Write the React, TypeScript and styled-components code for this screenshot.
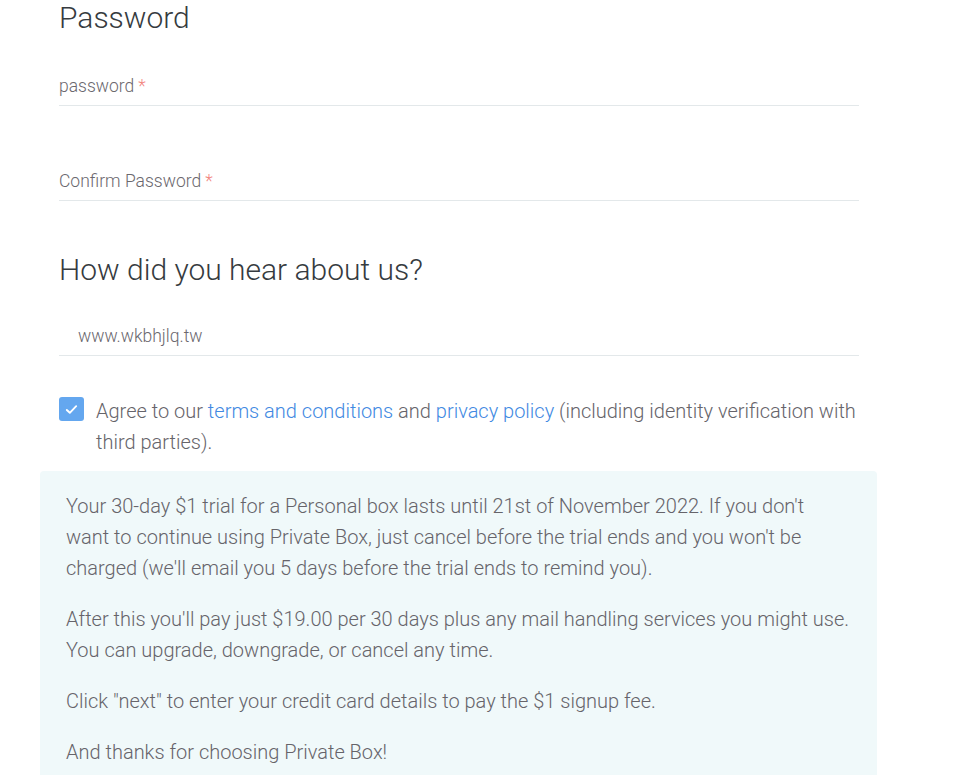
import React from "react";
import styled, { createGlobalStyle } from "styled-components";

const Global = createGlobalStyle`
  html, body { margin: 0; padding: 0; background: #ffffff; }
  body { font-family: Roboto, "Noto Sans", Arial, sans-serif; font-weight: 300; color: #5f6368; }
`;

const Page = styled.div`
  width: 837px;
  margin-left: 40px;
`;

const FormArea = styled.div`
  padding: 0 18px 0 19px;
`;

const Heading = styled.h2<{ $top: number }>`
  margin: ${(p) => p.$top}px 0 0;
  font-size: 30px;
  line-height: 36px;
  font-weight: 300;
  color: #363b40;
`;

const Field = styled.div<{ $pad: number; $gap?: number }>`
  padding-top: ${(p) => p.$pad}px;
  padding-bottom: 7px;
  margin-bottom: ${(p) => p.$gap ?? 0}px;
  border-bottom: 1px solid #e3e8ea;
`;

const Label = styled.div<{ $indent?: number }>`
  font-size: 17.5px;
  line-height: 24px;
  color: #6b686e;
  padding-left: ${(p) => p.$indent ?? 0}px;
`;

const Req = styled.span`
  color: #f2857f;
  margin-left: 4px;
`;

const AgreeRow = styled.label`
  display: flex;
  align-items: flex-start;
  gap: 12px;
  margin-top: 40px;
  font-size: 20px;
  line-height: 31px;
  color: #66646a;
`;

const Box = styled.span`
  flex: none;
  width: 25px;
  height: 24px;
  margin-top: 1px;
  border-radius: 3px;
  background: #64a7ef;
  display: flex;
  align-items: center;
  justify-content: center;
`;

const Link = styled.a`
  color: #4289e2;
  text-decoration: none;
`;

const Info = styled.div`
  margin-top: 13px;
  background: #f0f9fa;
  border-radius: 4px 4px 0 0;
  padding: 20px 25px 10px 26px;
`;

const Para = styled.p`
  margin: 0 0 20px;
  font-size: 20px;
  line-height: 31px;
  color: #66646a;
`;

export default function App() {
  return (
    <>
      <Global />
      <Page>
        <FormArea>
          <Heading $top={0}>Password</Heading>
          <Field $pad={38} $gap={25}>
            <Label>
              password<Req>*</Req>
            </Label>
          </Field>
          <Field $pad={38}>
            <Label>
              Confirm Password<Req>*</Req>
            </Label>
          </Field>
          <Heading $top={51}>How did you hear about us?</Heading>
          <Field $pad={36}>
            <Label $indent={19}>www.wkbhjlq.tw</Label>
          </Field>
          <AgreeRow>
            <Box>
              <svg width="15" height="15" viewBox="0 0 16 16" fill="none">
                <path d="M3 8.5l3.2 3L13 4.5" stroke="#ffffff" strokeWidth="2" strokeLinecap="round" strokeLinejoin="round" />
              </svg>
            </Box>
            <span>
              Agree to our <Link href="#">terms and conditions</Link> and{" "}
              <Link href="#">privacy policy</Link> (including identity verification with third parties).
            </span>
          </AgreeRow>
        </FormArea>
        <Info>
          <Para>
            Your 30-day $1 trial for a Personal box lasts until 21st of November 2022. If you don't want to continue
            using Private Box, just cancel before the trial ends and you won't be charged (we'll email you 5 days before
            the trial ends to remind you).
          </Para>
          <Para>
            After this you'll pay just $19.00 per 30 days plus any mail handling services you might use. You can
            upgrade, downgrade, or cancel any time.
          </Para>
          <Para>Click "next" to enter your credit card details to pay the $1 signup fee.</Para>
          <Para>And thanks for choosing Private Box!</Para>
        </Info>
      </Page>
    </>
  );
}
